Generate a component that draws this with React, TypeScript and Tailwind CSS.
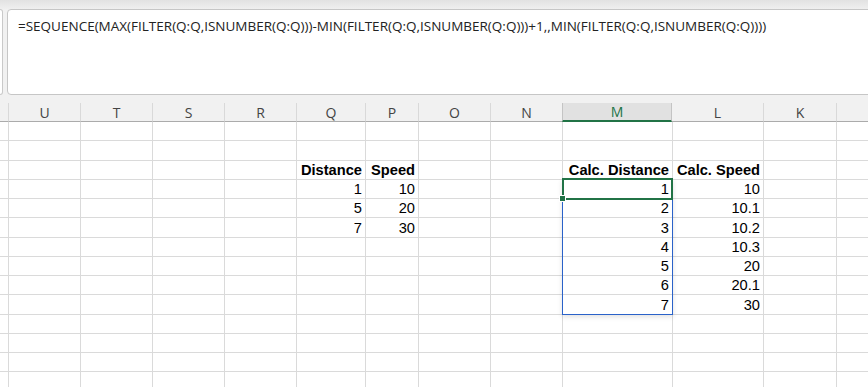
const columns = [
  { key: "V", w: "w-[8px]", edge: false },
  { key: "U", w: "w-[72px]", edge: true },
  { key: "T", w: "w-[72px]", edge: true },
  { key: "S", w: "w-[72px]", edge: true },
  { key: "R", w: "w-[72px]", edge: true },
  { key: "Q", w: "w-[69px]", edge: true },
  { key: "P", w: "w-[53px]", edge: true },
  { key: "O", w: "w-[72px]", edge: true },
  { key: "N", w: "w-[72px]", edge: true },
  { key: "M", w: "w-[110px]", edge: true },
  { key: "L", w: "w-[91px]", edge: true },
  { key: "K", w: "w-[73px]", edge: true },
  { key: "J", w: "w-[40px]", edge: true },
];

// row number (1-based below the header) -> column -> value
const cells: Record<number, Record<string, string>> = {
  3: { Q: "Distance", P: "Speed", M: "Calc. Distance", L: "Calc. Speed" },
  4: { Q: "1", P: "10", M: "1", L: "10" },
  5: { Q: "5", P: "20", M: "2", L: "10.1" },
  6: { Q: "7", P: "30", M: "3", L: "10.2" },
  7: { M: "4", L: "10.3" },
  8: { M: "5", L: "20" },
  9: { M: "6", L: "20.1" },
  10: { M: "7", L: "30" },
};

const rows = Array.from({ length: 14 }, (_, i) => i + 1);

const formula =
  "=SEQUENCE(MAX(FILTER(Q:Q,ISNUMBER(Q:Q)))-MIN(FILTER(Q:Q,ISNUMBER(Q:Q)))+1,,MIN(FILTER(Q:Q,ISNUMBER(Q:Q))))";

export default function App() {
  return (
    <div className="w-[868px] h-[387px] overflow-hidden bg-[#f1f1f1] font-['Open_Sans',sans-serif]">
      {/* Ribbon edge */}
      <div className="h-[9px] bg-gradient-to-b from-[#e2e2e2] to-[#efefef]" />

      {/* Formula bar */}
      <div className="flex h-[86px] gap-[4px]">
        <div className="w-[3px] bg-white border border-l-0 border-[#c9c9c9] rounded-r-[3px]" />
        <div className="flex-1 -mr-[20px] bg-white border border-[#c6c6c6] rounded-[4px] pl-[10px] pt-[6px]">
          <p className="text-[13.5px] leading-[20px] text-[#222] whitespace-nowrap">{formula}</p>
        </div>
      </div>

      {/* Column headers */}
      <div className="flex mt-[8px] h-[19px]">
        {columns.map((c) =>
          c.key === "M" ? (
            <div
              key={c.key}
              className={`${c.w} shrink-0 flex items-center justify-center bg-[#e1e1e1] border-l border-r border-[#c4c4c4] border-b-2 border-b-[#217346] text-[14px] text-[#217346]`}
            >
              {c.key}
            </div>
          ) : (
            <div
              key={c.key}
              className={`${c.w} shrink-0 flex items-center justify-center border-b border-b-[#ababab] text-[14px] text-[#444] ${
                c.edge ? "border-l border-l-[#d9d9d9]" : ""
              } ${c.key === "L" ? "border-l-0" : ""}`}
            >
              {c.key === "V" || c.key === "J" ? "" : c.key}
            </div>
          )
        )}
      </div>

      {/* Grid */}
      <div className="relative bg-white font-['Liberation_Sans',Arial,sans-serif] text-[14.67px] text-black">
        {rows.map((r) => (
          <div key={r} className="flex h-[19.25px]">
            {columns.map((c) => {
              const v = cells[r]?.[c.key];
              return (
                <div
                  key={c.key}
                  className={`${c.w} shrink-0 flex items-end justify-end pr-[3px] border-b border-[#dadada] leading-[17px] ${
                    c.edge ? "border-l" : ""
                  } ${r === 3 ? "font-bold" : ""}`}
                >
                  {v}
                </div>
              );
            })}
          </div>
        ))}

        {/* Spilled range */}
        <div className="absolute left-[562px] top-[56.75px] w-[111px] h-[135.75px] border border-[#2a62c9] shadow-[0_2px_5px_rgba(0,0,0,0.12)]" />
        {/* Active cell */}
        <div className="absolute left-[562px] top-[56px] w-[111px] h-[22px] border-2 border-[#217346]" />
        {/* Fill handle */}
        <div className="absolute left-[559px] top-[73px] w-[7px] h-[7px] bg-[#217346] border border-white" />
      </div>
    </div>
  );
}
